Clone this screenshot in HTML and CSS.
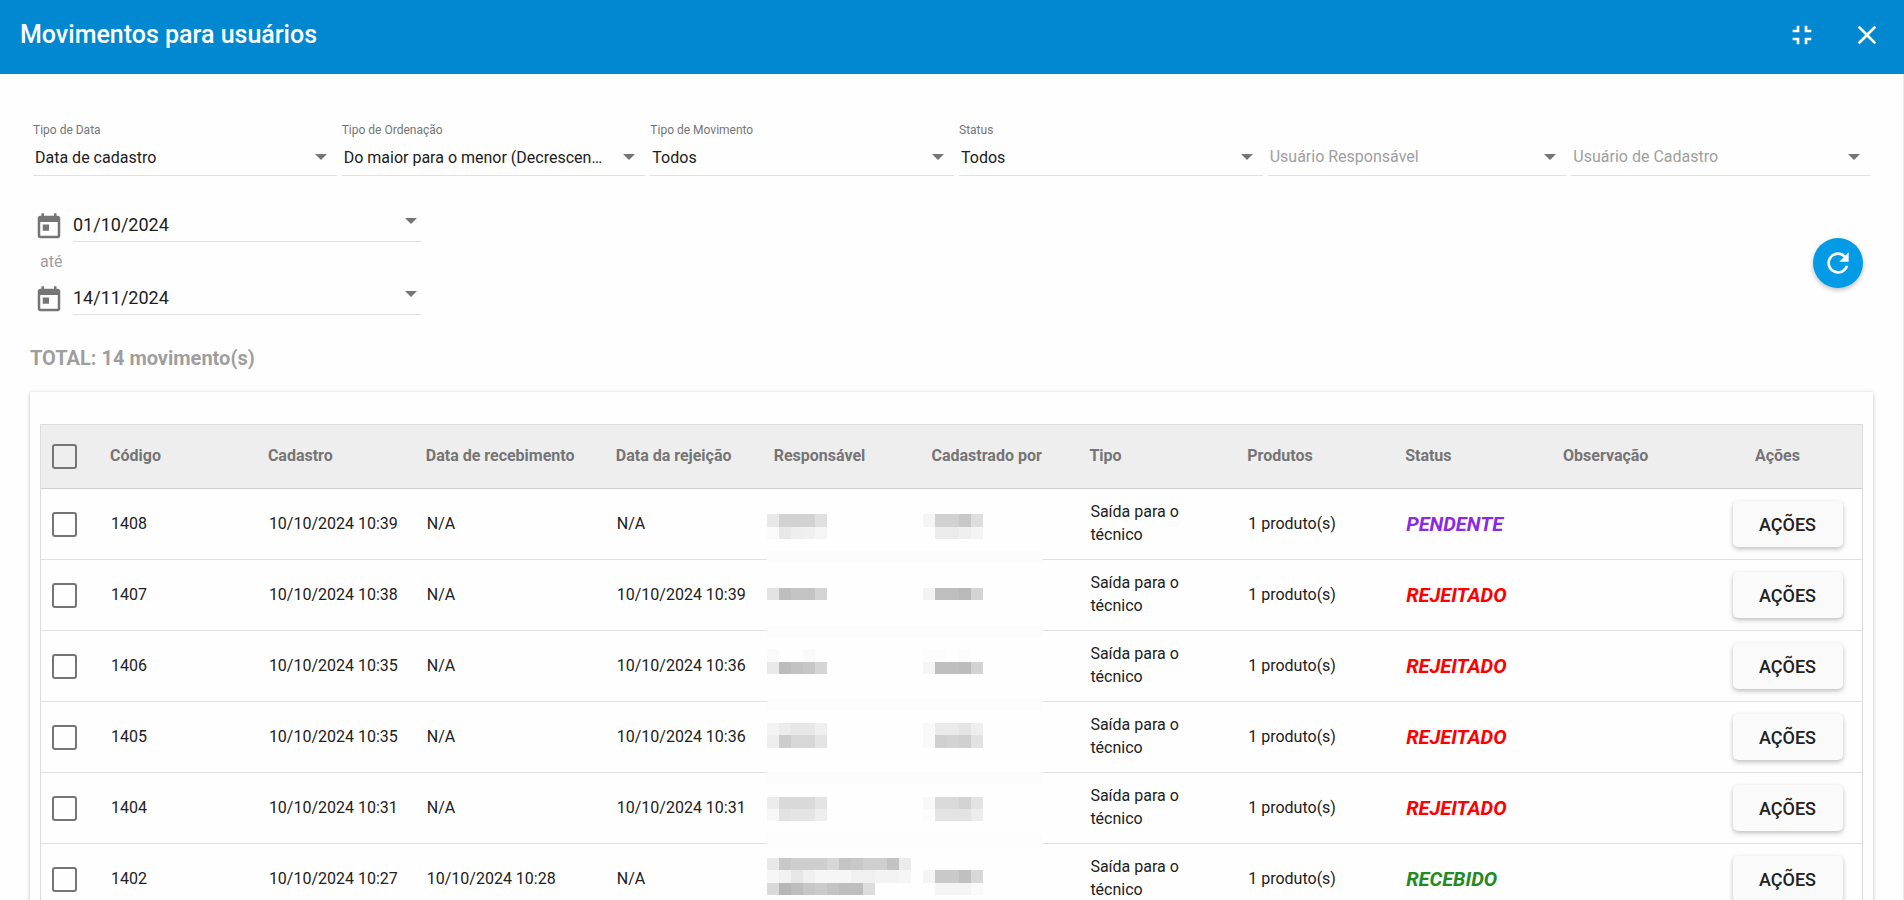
FILE: index.html
```html
<!DOCTYPE html>
<html lang="pt-BR">
	<head>
		<title>Movimentos para usuários</title>
		<meta charset="utf-8" />
		<meta name="viewport" content="width=device-width, initial-scale=1" />
		<link rel="stylesheet" href="styles.css">
	</head>
	<body>
		<header class="toolbar">
			<h1>Movimentos para usuários</h1>
			<div class="toolbar-actions">
				<button class="icon-btn" type="button" aria-label="Sair da tela cheia">
					<svg viewBox="0 0 24 24"><path d="M5 16h3v3h2v-5H5v2zm3-8H5v2h5V5H8v3zm6 11h2v-3h3v-2h-5v5zm2-11V5h-2v5h5V8h-3z"/></svg>
				</button>
				<button class="icon-btn" type="button" aria-label="Fechar">
					<svg viewBox="0 0 24 24"><path d="M19 6.41L17.59 5 12 10.59 6.41 5 5 6.41 10.59 12 5 17.59 6.41 19 12 13.41 17.59 19 19 17.59 13.41 12z"/></svg>
				</button>
			</div>
		</header>

		<main class="content">
			<form class="filters">
				<div class="filter-row">
					<div class="field">
						<label for="tipoData">Tipo de Data</label>
						<div class="select-box">
							<select id="tipoData"><option>Data de cadastro</option></select>
						</div>
					</div>
					<div class="field">
						<label for="tipoOrdenacao">Tipo de Ordenação</label>
						<div class="select-box">
							<select id="tipoOrdenacao"><option>Do maior para o menor (Decrescente)</option></select>
						</div>
					</div>
					<div class="field">
						<label for="tipoMovimento">Tipo de Movimento</label>
						<div class="select-box">
							<select id="tipoMovimento"><option>Todos</option></select>
						</div>
					</div>
					<div class="field">
						<label for="status">Status</label>
						<div class="select-box">
							<select id="status"><option>Todos</option></select>
						</div>
					</div>
					<div class="field field-user">
						<div class="select-box">
							<select class="empty" aria-label="Usuário Responsável"><option>Usuário Responsável</option></select>
						</div>
					</div>
					<div class="field field-user">
						<div class="select-box">
							<select class="empty" aria-label="Usuário de Cadastro"><option>Usuário de Cadastro</option></select>
						</div>
					</div>
				</div>

				<div class="period-row">
					<div class="period">
						<div class="date-field">
							<svg class="calendar" viewBox="0 0 24 24"><path d="M19 3h-1V1h-2v2H8V1H6v2H5c-1.11 0-1.99.9-1.99 2L3 19c0 1.1.89 2 2 2h14c1.1 0 2-.9 2-2V5c0-1.1-.9-2-2-2zm0 16H5V8h14v11zM7 10h5v5H7z"/></svg>
							<div class="date-box">
								<input type="text" value="01/10/2024" aria-label="Data inicial">
							</div>
						</div>
						<label class="until" for="dataFinal">até</label>
						<div class="date-field">
							<svg class="calendar" viewBox="0 0 24 24"><path d="M19 3h-1V1h-2v2H8V1H6v2H5c-1.11 0-1.99.9-1.99 2L3 19c0 1.1.89 2 2 2h14c1.1 0 2-.9 2-2V5c0-1.1-.9-2-2-2zm0 16H5V8h14v11zM7 10h5v5H7z"/></svg>
							<div class="date-box">
								<input type="text" id="dataFinal" value="14/11/2024">
							</div>
						</div>
					</div>
					<button class="refresh-btn" type="button" aria-label="Atualizar">
						<svg viewBox="0 0 24 24"><path d="M17.65 6.35C16.2 4.9 14.21 4 12 4c-4.42 0-7.99 3.58-7.99 8s3.57 8 7.99 8c3.73 0 6.84-2.55 7.73-6h-2.08c-.82 2.33-3.04 4-5.65 4-3.31 0-6-2.69-6-6s2.69-6 6-6c1.66 0 3.14.69 4.22 1.78L13 11h7V4l-2.35 2.35z"/></svg>
					</button>
				</div>
			</form>

			<h2 class="total">TOTAL: 14 movimento(s)</h2>

			<section class="card">
				<table class="movements">
					<colgroup>
						<col class="col-check">
						<col>
						<col>
						<col class="col-received">
						<col>
						<col>
						<col>
						<col>
						<col>
						<col>
						<col>
						<col class="col-actions">
					</colgroup>
					<thead>
						<tr>
							<th class="check"><input type="checkbox" aria-label="Selecionar todos"></th>
							<th>Código</th>
							<th>Cadastro</th>
							<th>Data de recebimento</th>
							<th>Data da rejeição</th>
							<th>Responsável</th>
							<th>Cadastrado por</th>
							<th>Tipo</th>
							<th>Produtos</th>
							<th>Status</th>
							<th>Observação</th>
							<th class="actions">Ações</th>
						</tr>
					</thead>
					<tbody>
						<tr>
							<td class="check"><input type="checkbox" aria-label="Selecionar 1408"></td>
							<td>1408</td>
							<td>10/10/2024 10:39</td>
							<td>N/A</td>
							<td>N/A</td>
							<td class="names">
								<!-- hidden user names, both columns and all rows -->
								<svg class="mosaic" width="276" height="411" viewBox="0 0 276 411" shape-rendering="crispEdges" aria-hidden="true">
									<g fill="#fcfcfc">
										<path d="M0 62h276v12H0zM0 136h276v12H0zM0 210h276v12H0zM0 283h276v12H0zM0 345h276v12H0z"/>
									</g>
									<g>
										<path fill="#e8e8e8" d="M0 25h12v13H0z"/>
										<path fill="#d2d2d2" d="M12 25h36v13H12z"/>
										<path fill="#e0e0e0" d="M48 25h12v13H48z"/>
										<path fill="#fafafa" d="M0 38h12v12H0z"/>
										<path fill="#e8e8e8" d="M12 38h12v12H12z"/>
										<path fill="#eeeeee" d="M24 38h12v12H24z"/>
										<path fill="#f0f0f0" d="M36 38h12v12H36z"/>
										<path fill="#f5f5f5" d="M48 38h12v12H48z"/>
										<path fill="#f5f5f5" d="M156 25h12v13h-12z"/>
										<path fill="#d1d1d1" d="M168 25h24v13h-24z"/>
										<path fill="#c8c8c8" d="M192 25h12v13h-12z"/>
										<path fill="#dedede" d="M204 25h12v13h-12z"/>
										<path fill="#ebebeb" d="M168 38h24v12h-24z"/>
										<path fill="#efefef" d="M192 38h12v12h-12z"/>
										<path fill="#f4f4f4" d="M204 38h12v12h-12z"/>
									</g>
									<g>
										<path fill="#e3e3e3" d="M0 99h12v12H0z"/>
										<path fill="#bebebe" d="M12 99h12v12H12z"/>
										<path fill="#c4c4c4" d="M24 99h24v12H24z"/>
										<path fill="#d4d4d4" d="M48 99h12v12H48z"/>
										<path fill="#f3f3f3" d="M156 99h12v12h-12z"/>
										<path fill="#bebebe" d="M168 99h24v12h-24z"/>
										<path fill="#b9b9b9" d="M192 99h12v12h-12z"/>
										<path fill="#d4d4d4" d="M204 99h12v12h-12z"/>
									</g>
									<g>
										<path fill="#fafafa" d="M0 160h12v13H0zM36 160h12v13H36z"/>
										<path fill="#fcfcfc" d="M156 160h24v13h-24zM192 160h12v13h-12z"/>
										<path fill="#e9e9e9" d="M0 173h12v12H0z"/>
										<path fill="#bcbcbc" d="M12 173h12v12H12z"/>
										<path fill="#c2c2c2" d="M24 173h12v12H24z"/>
										<path fill="#c6c6c6" d="M36 173h12v12H36z"/>
										<path fill="#d5d5d5" d="M48 173h12v12H48z"/>
										<path fill="#f5f5f5" d="M156 173h12v12h-12z"/>
										<path fill="#bfbfbf" d="M168 173h24v12h-24z"/>
										<path fill="#bcbcbc" d="M192 173h12v12h-12z"/>
										<path fill="#d3d3d3" d="M204 173h12v12h-12z"/>
									</g>
									<g>
										<path fill="#f3f3f3" d="M0 234h12v12H0z"/>
										<path fill="#ececec" d="M12 234h12v12H12z"/>
										<path fill="#e7e7e7" d="M24 234h24v12H24z"/>
										<path fill="#efefef" d="M48 234h12v12H48z"/>
										<path fill="#eeeeee" d="M0 246h12v13H0z"/>
										<path fill="#cdcdcd" d="M12 246h12v13H12z"/>
										<path fill="#d7d7d7" d="M24 246h24v13H24z"/>
										<path fill="#e4e4e4" d="M48 246h12v13H48z"/>
										<path fill="#f9f9f9" d="M156 234h12v25h-12z"/>
										<path fill="#eaeaea" d="M168 234h24v12h-24z"/>
										<path fill="#e4e4e4" d="M192 234h12v12h-12z"/>
										<path fill="#eeeeee" d="M204 234h12v12h-12z"/>
										<path fill="#d0d0d0" d="M168 246h36v13h-36z"/>
										<path fill="#d3d3d3" d="M180 246h12v13h-12z"/>
										<path fill="#e2e2e2" d="M204 246h12v13h-12z"/>
									</g>
									<g>
										<path fill="#ececec" d="M0 308h12v12H0z"/>
										<path fill="#d9d9d9" d="M12 308h36v12H12z"/>
										<path fill="#e4e4e4" d="M48 308h12v12H48z"/>
										<path fill="#f7f7f7" d="M0 320h12v12H0z"/>
										<path fill="#e2e2e2" d="M12 320h12v12H12z"/>
										<path fill="#e5e5e5" d="M24 320h24v12H24z"/>
										<path fill="#eeeeee" d="M48 320h12v12H48z"/>
										<path fill="#f8f8f8" d="M156 308h12v12h-12z"/>
										<path fill="#dadada" d="M168 308h24v12h-24z"/>
										<path fill="#d2d2d2" d="M192 308h12v12h-12z"/>
										<path fill="#e3e3e3" d="M204 308h12v12h-12zM168 320h36v12h-36z"/>
										<path fill="#fcfcfc" d="M156 320h12v12h-12z"/>
										<path fill="#ececec" d="M204 320h12v12h-12z"/>
									</g>
									<g>
										<path fill="#e8e8e8" d="M0 369h12v12H0z"/>
										<path fill="#c8c8c8" d="M12 369h12v12H12z"/>
										<path fill="#cecece" d="M24 369h36v12H24z"/>
										<path fill="#d7d7d7" d="M60 369h12v12H60z"/>
										<path fill="#c4c4c4" d="M72 369h12v12H72z"/>
										<path fill="#c8c8c8" d="M84 369h12v12H84z"/>
										<path fill="#cfcfcf" d="M96 369h24v12H96z"/>
										<path fill="#c3c3c3" d="M120 369h12v12h-12z"/>
										<path fill="#ebebeb" d="M132 369h12v12h-12z"/>
										<path fill="#f6f6f6" d="M0 381h144v13H0z"/>
										<path fill="#f2f2f2" d="M12 381h12v13H12z"/>
										<path fill="#e6e6e6" d="M24 381h12v13H24z"/>
										<path fill="#f0f0f0" d="M36 381h12v13H36zM84 381h24v13H84z"/>
										<path fill="#f3f3f3" d="M108 381h24v13h-24z"/>
										<path fill="#d9d9d9" d="M0 394h12v12H0z"/>
										<path fill="#b6b6b6" d="M12 394h12v12H12z"/>
										<path fill="#bdbdbd" d="M24 394h12v12H24z"/>
										<path fill="#c7c7c7" d="M36 394h12v12H36z"/>
										<path fill="#cbcbcb" d="M48 394h12v12H48z"/>
										<path fill="#c4c4c4" d="M60 394h12v12H60z"/>
										<path fill="#bebebe" d="M72 394h24v12H72z"/>
										<path fill="#dddddd" d="M96 394h12v12H96z"/>
										<path fill="#f4f4f4" d="M156 381h12v13h-12zM168 394h36v12h-36z"/>
										<path fill="#c9c9c9" d="M168 381h24v13h-24z"/>
										<path fill="#c0c0c0" d="M192 381h12v13h-12z"/>
										<path fill="#d8d8d8" d="M204 381h12v13h-12z"/>
										<path fill="#fafafa" d="M204 394h12v12h-12z"/>
									</g>
								</svg>
							</td>
							<td></td>
							<td>Saída para o técnico</td>
							<td>1 produto(s)</td>
							<td class="status pending">PENDENTE</td>
							<td></td>
							<td class="actions"><button class="action-btn" type="button">AÇÕES</button></td>
						</tr>
						<tr>
							<td class="check"><input type="checkbox" aria-label="Selecionar 1407"></td>
							<td>1407</td>
							<td>10/10/2024 10:38</td>
							<td>N/A</td>
							<td>10/10/2024 10:39</td>
							<td></td>
							<td></td>
							<td>Saída para o técnico</td>
							<td>1 produto(s)</td>
							<td class="status rejected">REJEITADO</td>
							<td></td>
							<td class="actions"><button class="action-btn" type="button">AÇÕES</button></td>
						</tr>
						<tr>
							<td class="check"><input type="checkbox" aria-label="Selecionar 1406"></td>
							<td>1406</td>
							<td>10/10/2024 10:35</td>
							<td>N/A</td>
							<td>10/10/2024 10:36</td>
							<td></td>
							<td></td>
							<td>Saída para o técnico</td>
							<td>1 produto(s)</td>
							<td class="status rejected">REJEITADO</td>
							<td></td>
							<td class="actions"><button class="action-btn" type="button">AÇÕES</button></td>
						</tr>
						<tr>
							<td class="check"><input type="checkbox" aria-label="Selecionar 1405"></td>
							<td>1405</td>
							<td>10/10/2024 10:35</td>
							<td>N/A</td>
							<td>10/10/2024 10:36</td>
							<td></td>
							<td></td>
							<td>Saída para o técnico</td>
							<td>1 produto(s)</td>
							<td class="status rejected">REJEITADO</td>
							<td></td>
							<td class="actions"><button class="action-btn" type="button">AÇÕES</button></td>
						</tr>
						<tr>
							<td class="check"><input type="checkbox" aria-label="Selecionar 1404"></td>
							<td>1404</td>
							<td>10/10/2024 10:31</td>
							<td>N/A</td>
							<td>10/10/2024 10:31</td>
							<td></td>
							<td></td>
							<td>Saída para o técnico</td>
							<td>1 produto(s)</td>
							<td class="status rejected">REJEITADO</td>
							<td></td>
							<td class="actions"><button class="action-btn" type="button">AÇÕES</button></td>
						</tr>
						<tr>
							<td class="check"><input type="checkbox" aria-label="Selecionar 1402"></td>
							<td>1402</td>
							<td>10/10/2024 10:27</td>
							<td>10/10/2024 10:28</td>
							<td>N/A</td>
							<td></td>
							<td></td>
							<td>Saída para o técnico</td>
							<td>1 produto(s)</td>
							<td class="status received">RECEBIDO</td>
							<td></td>
							<td class="actions"><button class="action-btn" type="button">AÇÕES</button></td>
						</tr>
					</tbody>
				</table>
			</section>
		</main>
	</body>
</html>
```

FILE: styles.css
```css
* {
	box-sizing: border-box;
}

body {
	margin: 0;
	height: 100vh;
	display: flex;
	flex-direction: column;
	overflow: hidden;
	background: #fefefe;
	color: #212121;
	font-family: Roboto, "Liberation Sans", sans-serif;
	font-size: 16px;
}

button,
input,
select {
	font-family: inherit;
	color: inherit;
	margin: 0;
}

button {
	cursor: pointer;
	border: none;
}

/* Toolbar */
.toolbar {
	display: flex;
	flex-shrink: 0;
	align-items: center;
	justify-content: space-between;
	height: 74px;
	padding: 0 21px 5px 20px;
	background: #0288d1;
	color: white;
}

.toolbar h1 {
	margin: 0;
	font-size: 25px;
	font-weight: 500;
}

.toolbar-actions {
	display: flex;
	gap: 33px;
}

.icon-btn {
	width: 32px;
	height: 32px;
	padding: 0;
	background: none;
}

.icon-btn svg {
	display: block;
	width: 32px;
	height: 32px;
	fill: white;
}

.content {
	flex: 1;
	min-height: 0;
	overflow: hidden;
	padding: 48px 30px 0;
	border-right: 1px solid #e8e8e8;
}

/* Filters */
.filters {
	padding: 0 3px;
}

.filter-row {
	display: flex;
	align-items: flex-end;
	gap: 5px;
}

.field {
	flex: 304 1 0;
	min-width: 0;
}

.field-user {
	flex-grow: 299;
}

.field label {
	display: block;
	font-size: 12px;
	line-height: 16px;
	color: #757575;
}

.select-box,
.date-box {
	position: relative;
}

.select-box::after,
.date-box::after {
	content: '';
	position: absolute;
	top: 16px;
	right: 10px;
	border: 6px solid transparent;
	border-top-color: #757575;
	border-bottom: 0;
	pointer-events: none;
}

.select-box select {
	display: block;
	appearance: none;
	width: 100%;
	height: 38px;
	padding: 2px 40px 0 2px;
	border: none;
	border-bottom: 1px solid #e0e0e0;
	border-radius: 0;
	background: none;
	font-size: 16px;
	text-overflow: ellipsis;
}

.select-box select.empty {
	padding-top: 0;
	color: #a0a0a0;
}

.period-row {
	display: flex;
	align-items: center;
	justify-content: space-between;
	margin-top: 32px;
	padding-right: 7px;
}

.date-field {
	display: flex;
	align-items: flex-end;
	gap: 9px;
	padding-left: 1px;
}

.calendar {
	width: 30px;
	height: 30px;
	fill: #757575;
}

.date-box::after {
	top: 10px;
	right: 4px;
}

.date-box input {
	display: block;
	width: 348px;
	height: 34px;
	padding: 0;
	border: none;
	border-bottom: 1px solid #e0e0e0;
	background: none;
	font-size: 18px;
}

.until {
	display: block;
	padding-left: 7px;
	line-height: 39px;
	color: #9e9e9e;
}

.refresh-btn {
	width: 50px;
	height: 50px;
	margin-top: 2px;
	padding: 9px;
	border-radius: 50%;
	background: #039be5;
	box-shadow: 0 2px 5px rgba(0, 0, 0, 0.26);
}

.refresh-btn svg {
	display: block;
	fill: white;
}

.total {
	margin: 31px 0 22px;
	font-size: 20px;
	line-height: 24px;
	color: #9e9e9e;
}

/* Table */
.card {
	padding: 32px 10px;
	box-shadow: 0 1px 4px rgba(0, 0, 0, 0.26);
}

.movements {
	width: 100%;
	table-layout: fixed;
	border: 1px solid #dcdcdc;
	border-spacing: 0;
	line-height: 23px;
}

.col-check {
	width: 61px;
}

.col-received {
	width: 190px;
}

.col-actions {
	width: 149px;
}

.movements th {
	height: 64px;
	padding: 0 8px 2px;
	border-bottom: 1px solid #d0d0d0;
	background: #eeeeee;
	color: #757575;
	text-align: left;
	white-space: nowrap;
}

.movements td {
	height: 71px;
	padding: 0 8px 2px 9px;
	border-bottom: 1px solid #e0e0e0;
}

.movements .check {
	padding: 0 0 0 11px;
}

.check input {
	display: block;
	appearance: none;
	width: 25px;
	height: 25px;
	border: 2px solid #757575;
	border-radius: 3px;
}

.movements th.actions {
	padding-right: 28px;
	text-align: center;
}

.movements td.actions {
	padding: 0;
	text-align: center;
}

.action-btn {
	width: 110px;
	height: 46px;
	border-radius: 5px;
	background: #fafafa;
	box-shadow: 0 2px 5px rgba(0, 0, 0, 0.26);
	font-size: 18px;
	font-weight: 500;
}

.movements .status {
	padding-bottom: 0;
	font-size: 20px;
	font-weight: 700;
	font-style: italic;
}

.pending {
	color: #8a2be2;
}

.rejected {
	color: #ff0000;
}

.received {
	color: #228b22;
}

.names {
	position: relative;
}

.mosaic {
	position: absolute;
	top: 0;
	left: 1px;
}
```
